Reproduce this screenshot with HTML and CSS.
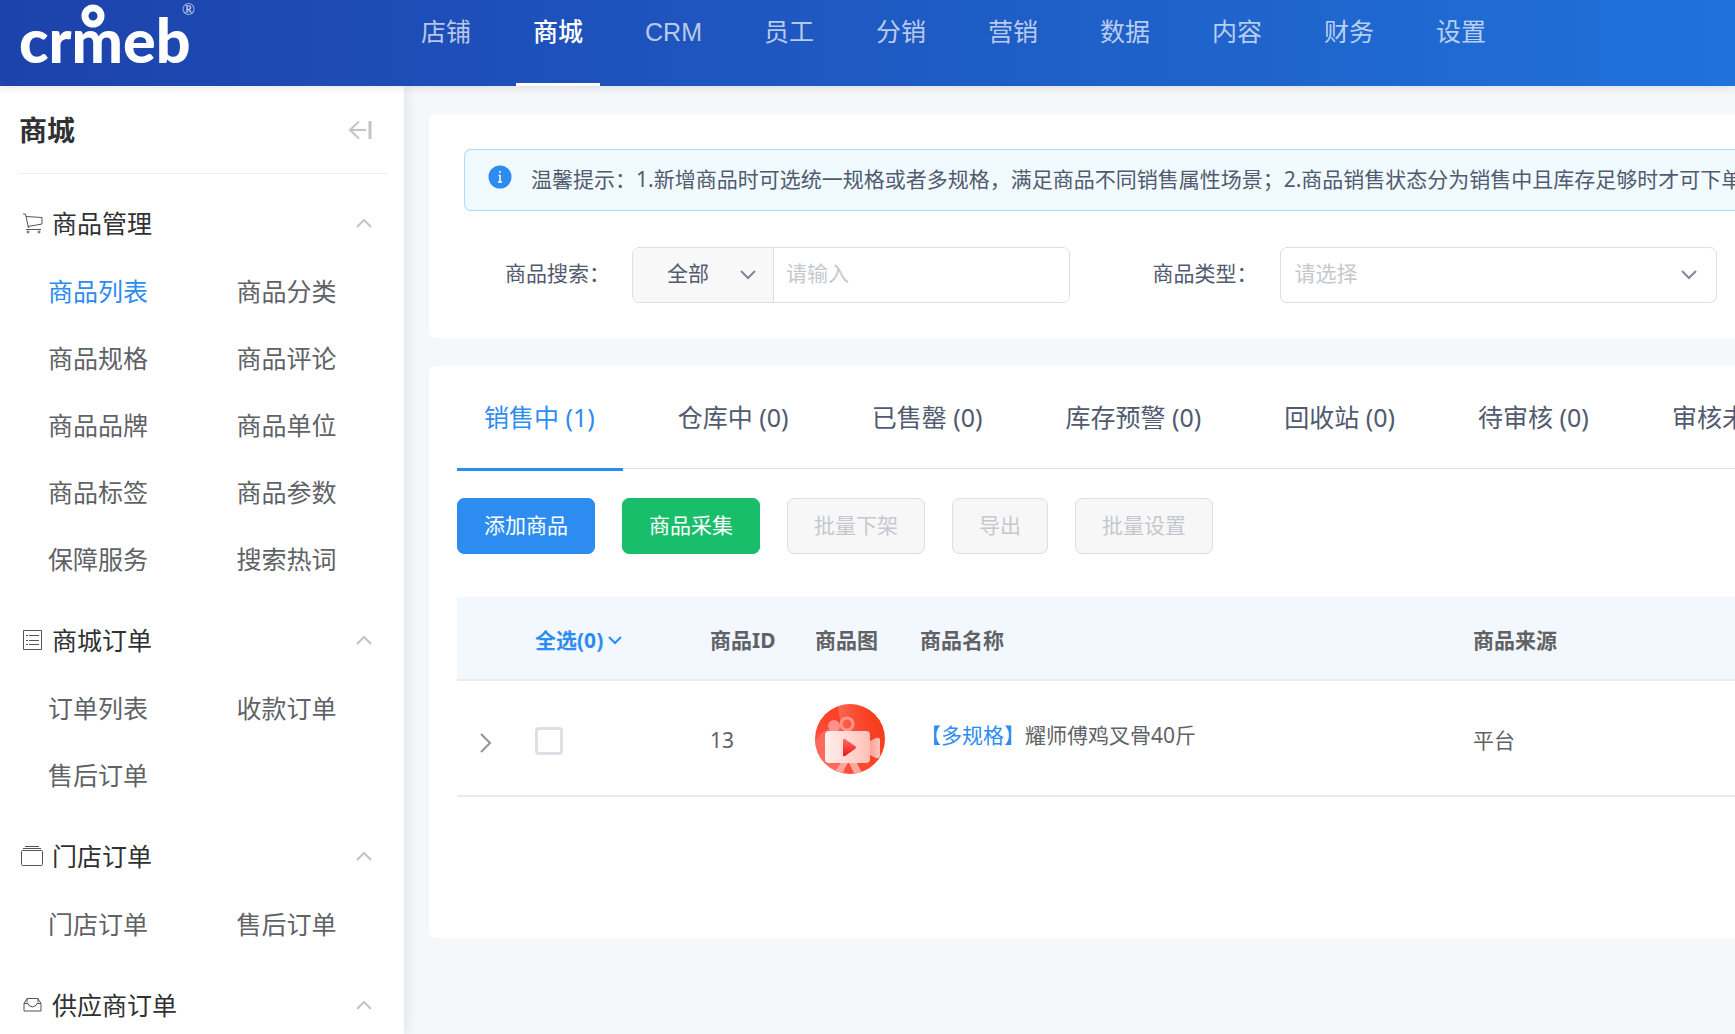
FILE: index.html
```html
<!DOCTYPE html>
<html lang="zh-CN">
<head>
    <meta charset="UTF-8">
    <meta name="viewport" content="width=device-width, initial-scale=1.0">
    <title>商品列表</title>
    <link rel="stylesheet" href="styles.css">
</head>
<body>

<header class="header">
    <a class="logo" href="#" aria-label="crmeb">
        <svg width="204" height="80" viewBox="0 0 204 80">
            <text class="logo-word" x="19" y="63">crmeb</text>
            <circle cx="93" cy="16" r="8" fill="none" stroke="#fff" stroke-width="7"/>
            <text class="logo-mark" x="182" y="15">®</text>
        </svg>
    </a>
    <nav class="nav">
        <a href="#">店铺</a>
        <a href="#" class="active">商城</a>
        <a href="#">CRM</a>
        <a href="#">员工</a>
        <a href="#">分销</a>
        <a href="#">营销</a>
        <a href="#">数据</a>
        <a href="#">内容</a>
        <a href="#">财务</a>
        <a href="#">设置</a>
    </nav>
</header>

<div class="layout">
    <!-- Sidebar -->
    <aside class="sidebar">
        <div class="sidebar-title">
            <h1>商城</h1>
            <button class="collapse" aria-label="收起菜单">
                <svg width="24" height="20" viewBox="0 0 24 20" fill="none" stroke="#c0c4cc">
                    <path d="M11 1.5 2 10l9 8.500M2 10h16" stroke-width="2"/>
                    <path d="M22 1v18" stroke-width="3"/>
                </svg>
            </button>
        </div>

        <section class="group">
            <button class="group-head">
                <svg class="group-icon" width="24" height="24" viewBox="0 0 24 24" fill="none" stroke="#555">
                    <path d="M3 3h2.500l3 14M6 5.500l16 1v6.500L8 15.500M6 18.500h15"/>
                    <circle cx="8" cy="21" r="1"/><circle cx="19" cy="21" r="1"/>
                </svg>
                <span>商品管理</span>
                <svg class="arrow" width="16" height="10" viewBox="0 0 16 10"><path d="M1 9l7-7 7 7"/></svg>
            </button>
            <div class="group-items">
                <a href="#" class="active">商品列表</a>
                <a href="#">商品分类</a>
                <a href="#">商品规格</a>
                <a href="#">商品评论</a>
                <a href="#">商品品牌</a>
                <a href="#">商品单位</a>
                <a href="#">商品标签</a>
                <a href="#">商品参数</a>
                <a href="#">保障服务</a>
                <a href="#">搜索热词</a>
            </div>
        </section>

        <section class="group">
            <button class="group-head">
                <svg class="group-icon" width="24" height="24" viewBox="0 0 24 24" fill="none" stroke="#555">
                    <path d="M3.500 2.500h18v19h-18zM9 7.500h10M9 12.500h10M9 16.500h10M6 7.500h2M6 12.500h2M6 16.500h2"/>
                </svg>
                <span>商城订单</span>
                <svg class="arrow" width="16" height="10" viewBox="0 0 16 10"><path d="M1 9l7-7 7 7"/></svg>
            </button>
            <div class="group-items">
                <a href="#">订单列表</a>
                <a href="#">收款订单</a>
                <a href="#">售后订单</a>
            </div>
        </section>

        <section class="group">
            <button class="group-head">
                <svg class="group-icon" width="24" height="24" viewBox="0 0 24 24" fill="none" stroke="#555">
                    <rect x="1.500" y="6.500" width="21" height="15" rx="1"/>
                    <path d="M3 4.500h18M5 2.500h14"/>
                </svg>
                <span>门店订单</span>
                <svg class="arrow" width="16" height="10" viewBox="0 0 16 10"><path d="M1 9l7-7 7 7"/></svg>
            </button>
            <div class="group-items">
                <a href="#">门店订单</a>
                <a href="#">售后订单</a>
            </div>
        </section>

        <section class="group">
            <button class="group-head">
                <svg class="group-icon" width="24" height="24" viewBox="0 0 24 24" fill="none" stroke="#555">
                    <path d="M7 5.500h11l3 5v7.500h-17v-7.500zM4 10.500h4l1 2 3.500 1.500 3.500-1.500 1-2h4M7 5.500v4M18 5.500v4"/>
                </svg>
                <span>供应商订单</span>
                <svg class="arrow" width="16" height="10" viewBox="0 0 16 10"><path d="M1 9l7-7 7 7"/></svg>
            </button>
        </section>
    </aside>

    <main class="main">
        <!-- Search -->
        <section class="card search-card">
            <div class="alert">
                <svg width="24" height="24" viewBox="0 0 24 24">
                    <circle cx="12" cy="12" r="11.500" fill="#2d8cf0"/>
                    <path d="M12 6v2M10.500 10.500H12V17M10 17h4" fill="none" stroke="#fff" stroke-width="1.500"/>
                </svg>
                <p>温馨提示：1.新增商品时可选统一规格或者多规格，满足商品不同销售属性场景；2.商品销售状态分为销售中且库存足够时才可下单</p>
            </div>
            <form class="search-form">
                <div class="field">
                    <label for="keyword">商品搜索：</label>
                    <div class="control">
                        <div class="select-box prepend">
                            <select aria-label="搜索范围">
                                <option>全部</option>
                            </select>
                            <svg width="16" height="10" viewBox="0 0 16 10"><path d="M1 1l7 7 7-7"/></svg>
                        </div>
                        <input type="text" id="keyword" placeholder="请输入">
                    </div>
                </div>
                <div class="field">
                    <label for="type">商品类型：</label>
                    <div class="control select-box">
                        <select id="type" class="empty">
                            <option>请选择</option>
                        </select>
                        <svg width="16" height="10" viewBox="0 0 16 10"><path d="M1 1l7 7 7-7"/></svg>
                    </div>
                </div>
            </form>
        </section>

        <!-- Product list -->
        <section class="card list-card">
            <div class="tabs">
                <button class="tab active">销售中 (1)</button>
                <button class="tab">仓库中 (0)</button>
                <button class="tab">已售罄 (0)</button>
                <button class="tab">库存预警 (0)</button>
                <button class="tab">回收站 (0)</button>
                <button class="tab">待审核 (0)</button>
                <button class="tab">审核未通过 (0)</button>
            </div>
            <div class="actions">
                <button class="btn primary">添加商品</button>
                <button class="btn success">商品采集</button>
                <button class="btn" disabled>批量下架</button>
                <button class="btn" disabled>导出</button>
                <button class="btn" disabled>批量设置</button>
            </div>
            <table class="table">
                <colgroup>
                    <col class="col-expand">
                    <col class="col-check">
                    <col class="col-id">
                    <col class="col-pic">
                    <col class="col-name">
                    <col>
                </colgroup>
                <thead>
                    <tr>
                        <th></th>
                        <th>
                            <button class="select-all">全选(0)
                                <svg width="14" height="9" viewBox="0 0 14 9"><path d="M1 1l6 6 6-6" fill="none" stroke="#2d8cf0" stroke-width="2"/></svg>
                            </button>
                        </th>
                        <th>商品ID</th>
                        <th>商品图</th>
                        <th>商品名称</th>
                        <th>商品来源</th>
                    </tr>
                </thead>
                <tbody>
                    <tr>
                        <td class="expand-cell">
                            <button class="expand" aria-label="展开">
                                <svg width="12" height="20" viewBox="0 0 12 20"><path d="M1 1l9 9-9 9" fill="none" stroke="#909399" stroke-width="2"/></svg>
                            </button>
                        </td>
                        <td class="check-cell"><input type="checkbox" class="check" aria-label="选择商品"></td>
                        <td>13</td>
                        <td class="pic-cell">
                            <svg class="pic" width="70" height="70" viewBox="0 0 70 70">
                                <defs>
                                    <linearGradient id="bg" x1="0" y1="1" x2="1" y2="0">
                                        <stop offset="0" stop-color="#ff5a50"/>
                                        <stop offset="0.5" stop-color="#ff432b"/>
                                        <stop offset="1" stop-color="#f23a14"/>
                                    </linearGradient>
                                    <linearGradient id="body">
                                        <stop offset="0" stop-color="#fff0ec"/>
                                        <stop offset="1" stop-color="#ffc0b8"/>
                                    </linearGradient>
                                    <linearGradient id="lens">
                                        <stop offset="0" stop-color="#ff9f94"/>
                                        <stop offset="1" stop-color="#ffc8c0"/>
                                    </linearGradient>
                                    <linearGradient id="play" x1="0" y1="0" x2="0" y2="1">
                                        <stop offset="0" stop-color="#ff7068"/>
                                        <stop offset="1" stop-color="#f01410"/>
                                    </linearGradient>
                                    <linearGradient id="glow">
                                        <stop offset="0" stop-color="#ff8074" stop-opacity="0.600"/>
                                        <stop offset="1" stop-color="#f23a14" stop-opacity="0"/>
                                    </linearGradient>
                                    <clipPath id="round"><circle cx="35" cy="35" r="35"/></clipPath>
                                </defs>
                                <g clip-path="url(#round)">
                                    <rect width="70" height="70" fill="url(#bg)"/>
                                    <path d="M23 0q0 14 7 28h40V0z" fill="url(#glow)"/>
                                    <path d="M0 38Q8 22 26 24L30 70H0z" fill="#ff736b" opacity="0.700"/>
                                    <path d="M27 57h7l-8 14h-8zM33 57h8l7 14h-8z" fill="#ffa69d"/>
                                    <circle cx="19" cy="22" r="6" fill="#ff938a"/>
                                    <circle cx="32" cy="20" r="6" fill="none" stroke="#ff958b" stroke-width="3"/>
                                    <rect x="10" y="27" width="45" height="32" rx="4" fill="url(#body)"/>
                                    <path d="M55 37l6-3q4-1 4 2v15q0 4-4 3l-6-3z" fill="url(#lens)"/>
                                    <path d="M28 36q0-2 2-1l10 7q2 1 0 3l-10 7q-2 1-2-1z" fill="url(#play)"/>
                                </g>
                            </svg>
                        </td>
                        <td class="name-cell"><a href="#">【多规格】</a>耀师傅鸡叉骨40斤</td>
                        <td>平台</td>
                    </tr>
                </tbody>
            </table>
        </section>
    </main>
</div>

</body>
</html>
```

FILE: styles.css
```css
* {
    box-sizing: border-box;
}

body {
    margin: 0;
    height: 100vh;
    display: flex;
    flex-direction: column;
    overflow: hidden;
    background-color: #f5f7f9;
    color: #515a6e;
    font-family: "Noto Sans", "Noto Sans CJK SC", sans-serif;
    font-size: 21px;
    line-height: 32px;
}

a {
    color: #2d8cf0;
    text-decoration: none;
}

button,
input,
select {
    font: inherit;
    color: inherit;
}

button {
    padding: 0;
    border: none;
    background: none;
    cursor: pointer;
}

svg {
    flex-shrink: 0;
}

/* header */
.header {
    display: flex;
    flex-shrink: 0;
    height: 86px;
    background: linear-gradient(90deg, #1d42ab, #2071da);
    box-shadow: 0 2px 8px rgba(0, 21, 41, 0.1);
    z-index: 2;
}

.logo {
    width: 404px;
}

.logo-word {
    font-family: Lato, sans-serif;
    font-size: 61px;
    font-weight: 900;
    fill: #fff;
}

.logo-mark {
    font-family: "Liberation Serif", serif;
    font-size: 17px;
    fill: #dde4f5;
}

.nav {
    display: flex;
    gap: 28px;
}

.nav a {
    padding: 0 17px;
    border-bottom: 3px solid transparent;
    color: rgba(255, 255, 255, 0.7);
    font-family: "Liberation Sans", "Noto Sans CJK SC", sans-serif;
    font-size: 25px;
    line-height: 64px;
}

.nav .active {
    border-color: #fff;
    color: #fff;
    font-weight: 500;
}

.layout {
    display: flex;
    flex: 1;
    min-height: 0;
}

/* sidebar */
.sidebar {
    flex-shrink: 0;
    width: 404px;
    padding: 0 17px 0 19px;
    background-color: #fff;
    box-shadow: 2px 0 12px rgba(29, 35, 41, 0.1);
    overflow: hidden;
}

.sidebar-title {
    display: flex;
    justify-content: space-between;
    align-items: center;
    height: 88px;
    margin-bottom: 14px;
    padding-right: 15px;
    border-bottom: 1px solid #eee;
}

.sidebar-title h1 {
    margin: 0;
    color: #303133;
    font-size: 28px;
    font-weight: bold;
}

.collapse {
    display: flex;
}

.group {
    padding-bottom: 12px;
}

.group-head {
    display: flex;
    align-items: center;
    width: 100%;
    height: 70px;
    padding-right: 15px;
    color: #303133;
    font-size: 25px;
}

.group-icon {
    margin: 0 8px 0 1px;
}

.arrow {
    margin-left: auto;
    fill: none;
    stroke: #c0c4cc;
    stroke-width: 2;
}

.group-items {
    display: grid;
    grid-template-columns: 1fr 1fr;
    column-gap: 38px;
    padding-left: 29px;
}

.group-items a {
    color: #606266;
    font-size: 25px;
    line-height: 67px;
    white-space: nowrap;
}

.group-items .active {
    color: #2d8cf0;
}

/* content */
.main {
    flex: 1;
    min-width: 0;
    padding: 28px 0 0 25px;
}

.card {
    background-color: #fff;
    border-radius: 7px 0 0 7px;
    overflow: hidden;
}

.search-card {
    margin-bottom: 28px;
    padding: 35px 0 35px 35px;
}

.alert {
    display: flex;
    gap: 19px;
    margin-bottom: 36px;
    padding: 13px 0 15px 23px;
    border: 1px solid #abdcff;
    border-right: none;
    border-radius: 7px 0 0 7px;
    background-color: #f0faff;
    overflow: hidden;
}

.alert svg {
    margin-top: 2px;
}

.alert p {
    margin: 0;
    white-space: nowrap;
}

.search-form {
    display: flex;
    gap: 42px;
    padding-right: 18px;
}

.field {
    display: flex;
    flex: 1;
    min-width: 0;
    align-items: center;
}

.field label {
    flex-shrink: 0;
    width: 168px;
    padding: 0 22px 4px 0;
    text-align: right;
}

.control {
    display: flex;
    flex: 1;
    min-width: 0;
    height: 56px;
    border: 1px solid #dcdee2;
    border-radius: 7px;
    overflow: hidden;
}

.control input {
    flex: 1;
    min-width: 0;
    padding: 0 12px 4px;
    border: none;
    outline: none;
}

.control input::placeholder {
    color: #c5c8ce;
}

.select-box {
    display: flex;
    align-items: center;
    padding-right: 19px;
}

.select-box select {
    flex: 1;
    height: 100%;
    padding: 0 0 4px 14px;
    border: none;
    outline: none;
    appearance: none;
    background: none;
}

.select-box .empty {
    color: #c5c8ce;
}

.select-box svg {
    fill: none;
    stroke: #808695;
    stroke-width: 2;
}

.prepend {
    flex-shrink: 0;
    width: 141px;
    border-right: 1px solid #dcdee2;
    background-color: #f8f8f9;
    padding-right: 17px;
}

.prepend select {
    padding-left: 34px;
}

.list-card {
    min-height: 572px;
    padding-left: 28px;
}

.tabs {
    display: flex;
    gap: 28px;
    height: 105px;
    margin-bottom: 27px;
    box-shadow: inset 0 -2px #fff, inset 0 -3px #dcdee2;
}

.tab {
    padding: 0 28px 0 27px;
    border-bottom: 3px solid transparent;
    font-size: 25px;
    white-space: nowrap;
}

.tab.active {
    border-color: #2d8cf0;
    color: #2d8cf0;
}

.actions {
    display: flex;
    gap: 27px;
    margin-bottom: 43px;
}

.btn {
    height: 56px;
    padding: 0 26px 2px;
    border: 1px solid #dcdee2;
    border-radius: 7px;
}

.btn:disabled {
    background-color: #f7f7f7;
    color: #c5c8ce;
    cursor: not-allowed;
}

.btn.primary {
    border-color: #2d8cf0;
    background-color: #2d8cf0;
    color: #fff;
}

.btn.success {
    border-color: #19be6b;
    background-color: #19be6b;
    color: #fff;
}

.table {
    width: 100%;
    table-layout: fixed;
    border-collapse: separate;
    border-spacing: 0;
    color: #606266;
}

.col-expand {
    width: 64px;
}

.col-check {
    width: 175px;
}

.col-id,
.col-pic {
    width: 105px;
}

.col-name {
    width: 553px;
}

.table th,
.table td {
    padding: 4px 0 0 14px;
    border-bottom: 2px solid #e8eaec;
    text-align: left;
    white-space: nowrap;
}

.table th {
    height: 84px;
    background-color: #f3f8fe;
    font-weight: bold;
}

.table td {
    height: 116px;
}

.select-all {
    display: flex;
    align-items: center;
    gap: 5px;
    color: #2d8cf0;
}

.table .expand-cell {
    padding: 14px 0 0 23px;
}

.table .check-cell {
    padding-top: 6px;
}

.expand,
.check,
.pic {
    display: block;
}

.check {
    width: 28px;
    height: 28px;
    margin: 0;
    border: 3px solid #dcdfe6;
    border-radius: 4px;
    appearance: none;
    background-color: #fff;
}

.table .pic-cell {
    padding-top: 2px;
}

.table .name-cell {
    padding: 0 0 6px 14px;
}
```
